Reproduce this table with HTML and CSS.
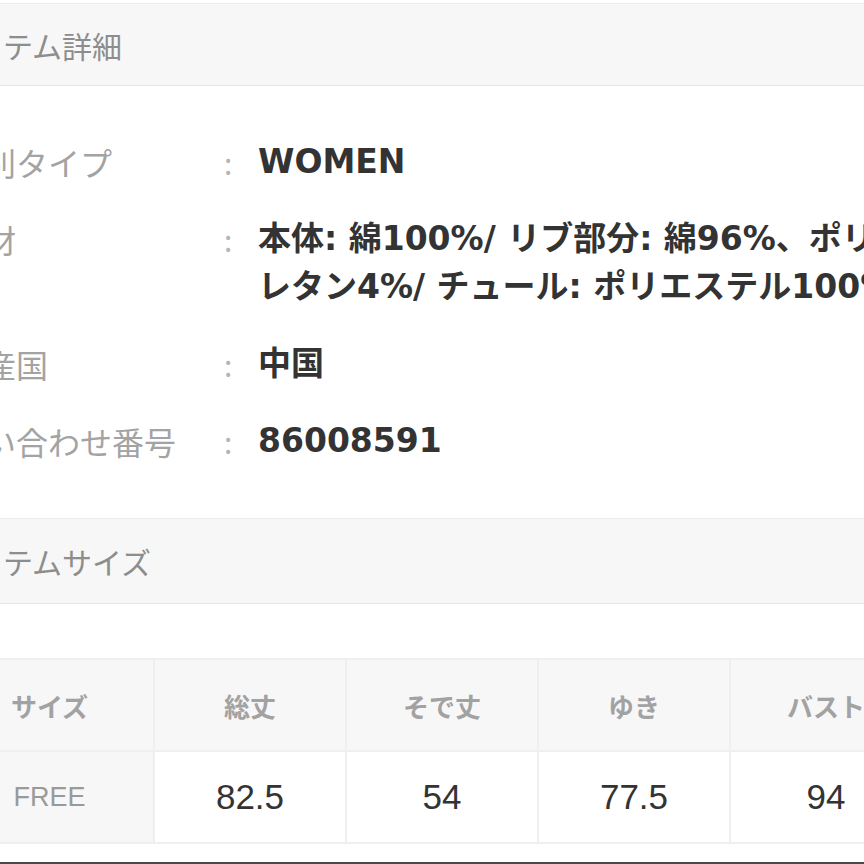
FILE: index.html
```html
<!DOCTYPE html>
<html lang="ja">
<head>
  <meta charset="UTF-8">
  <title>アイテム詳細</title>
  <link rel="stylesheet" href="styles.css">
</head>
<body>

  <div class="page">
    <h2 class="section-title">アイテム詳細</h2>

    <dl class="spec-list">
      <div class="spec-row">
        <dt>性別タイプ</dt>
        <dd><span class="value">WOMEN</span></dd>
      </div>
      <div class="spec-row">
        <dt>素材</dt>
        <dd><span class="value">本体: 綿100%/ リブ部分: 綿96%、ポリウ<br>レタン4%/ チュール: ポリエステル100%</span></dd>
      </div>
      <div class="spec-row">
        <dt>原産国</dt>
        <dd><span class="value">中国</span></dd>
      </div>
      <div class="spec-row">
        <dt>問い合わせ番号</dt>
        <dd><span class="value">86008591</span></dd>
      </div>
    </dl>

    <h2 class="section-title">アイテムサイズ</h2>

    <table class="size-table">
      <tr>
        <th class="size-name">サイズ</th>
        <th>総丈</th>
        <th>そで丈</th>
        <th>ゆき</th>
        <th>バスト</th>
      </tr>
      <tr>
        <th class="size-name free">FREE</th>
        <td>82.5</td>
        <td>54</td>
        <td>77.5</td>
        <td>94</td>
      </tr>
    </table>

    <div class="page-end"></div>
  </div>

</body>
</html>
```

FILE: styles.css
```css
html, body {
  margin: 0;
  padding: 0;
  background: #fff;
  overflow: hidden;
}
body {
  width: 864px;
  height: 864px;
  font-family: "Noto Sans CJK JP", sans-serif;
}
.page {
  margin-left: -60px;
  width: 1060px;
}
.section-title {
  margin: 3px 0 0;
  height: 81px;
  padding-left: 5px;
  display: flex;
  align-items: center;
  background: #f7f7f7;
  border-top: 1px solid #ececec;
  border-bottom: 1px solid #e6e6e6;
  font-size: 30px;
  font-weight: 400;
  color: #8d8d8d;
}
.spec-list + .section-title {
  margin-top: 0;
  height: 84px;
}
.spec-list {
  margin: 0;
  padding: 52px 0 53px;
  display: flex;
  flex-direction: column;
  gap: 29px;
}
.spec-row {
  display: grid;
  grid-template-columns: 284px 1fr;
  line-height: 48px;
}
.spec-row dt {
  padding-left: 12px;
  font-size: 32px;
  color: #a3a3a3;
}
.spec-row dd {
  margin: 0;
  display: flex;
}
.spec-row dd::before {
  content: ":";
  flex: none;
  width: 34px;
  font-size: 30px;
  color: #b5b5b5;
}
.value {
  font-family: "DejaVu Sans", "Noto Sans CJK JP", sans-serif;
  font-size: 33px;
  font-weight: 700;
  color: #333;
  white-space: nowrap;
}
.size-table {
  margin: 54px 0 0 4px;
  border-collapse: separate;
  border-spacing: 2px;
  background: #efefef;
  table-layout: fixed;
}
.size-table th,
.size-table td {
  height: 90px;
  padding: 0;
  text-align: center;
  width: 190px;
}
.size-table th {
  background: #f7f7f7;
  font-size: 26px;
  font-weight: 700;
  color: #a2a2a2;
}
.size-table th.size-name {
  width: 207px;
}
.size-table th.free {
  font-family: "Liberation Sans", sans-serif;
  font-size: 27px;
  font-weight: 400;
  color: #9a9a9a;
}
.size-table td {
  background: #fff;
  font-family: "Liberation Sans", sans-serif;
  font-size: 35px;
  color: #333;
}
.size-table td:nth-child(3) {
  width: 188px;
}
.page-end {
  margin-top: 18px;
  border-top: 2px solid #4a4a4a;
}
```
